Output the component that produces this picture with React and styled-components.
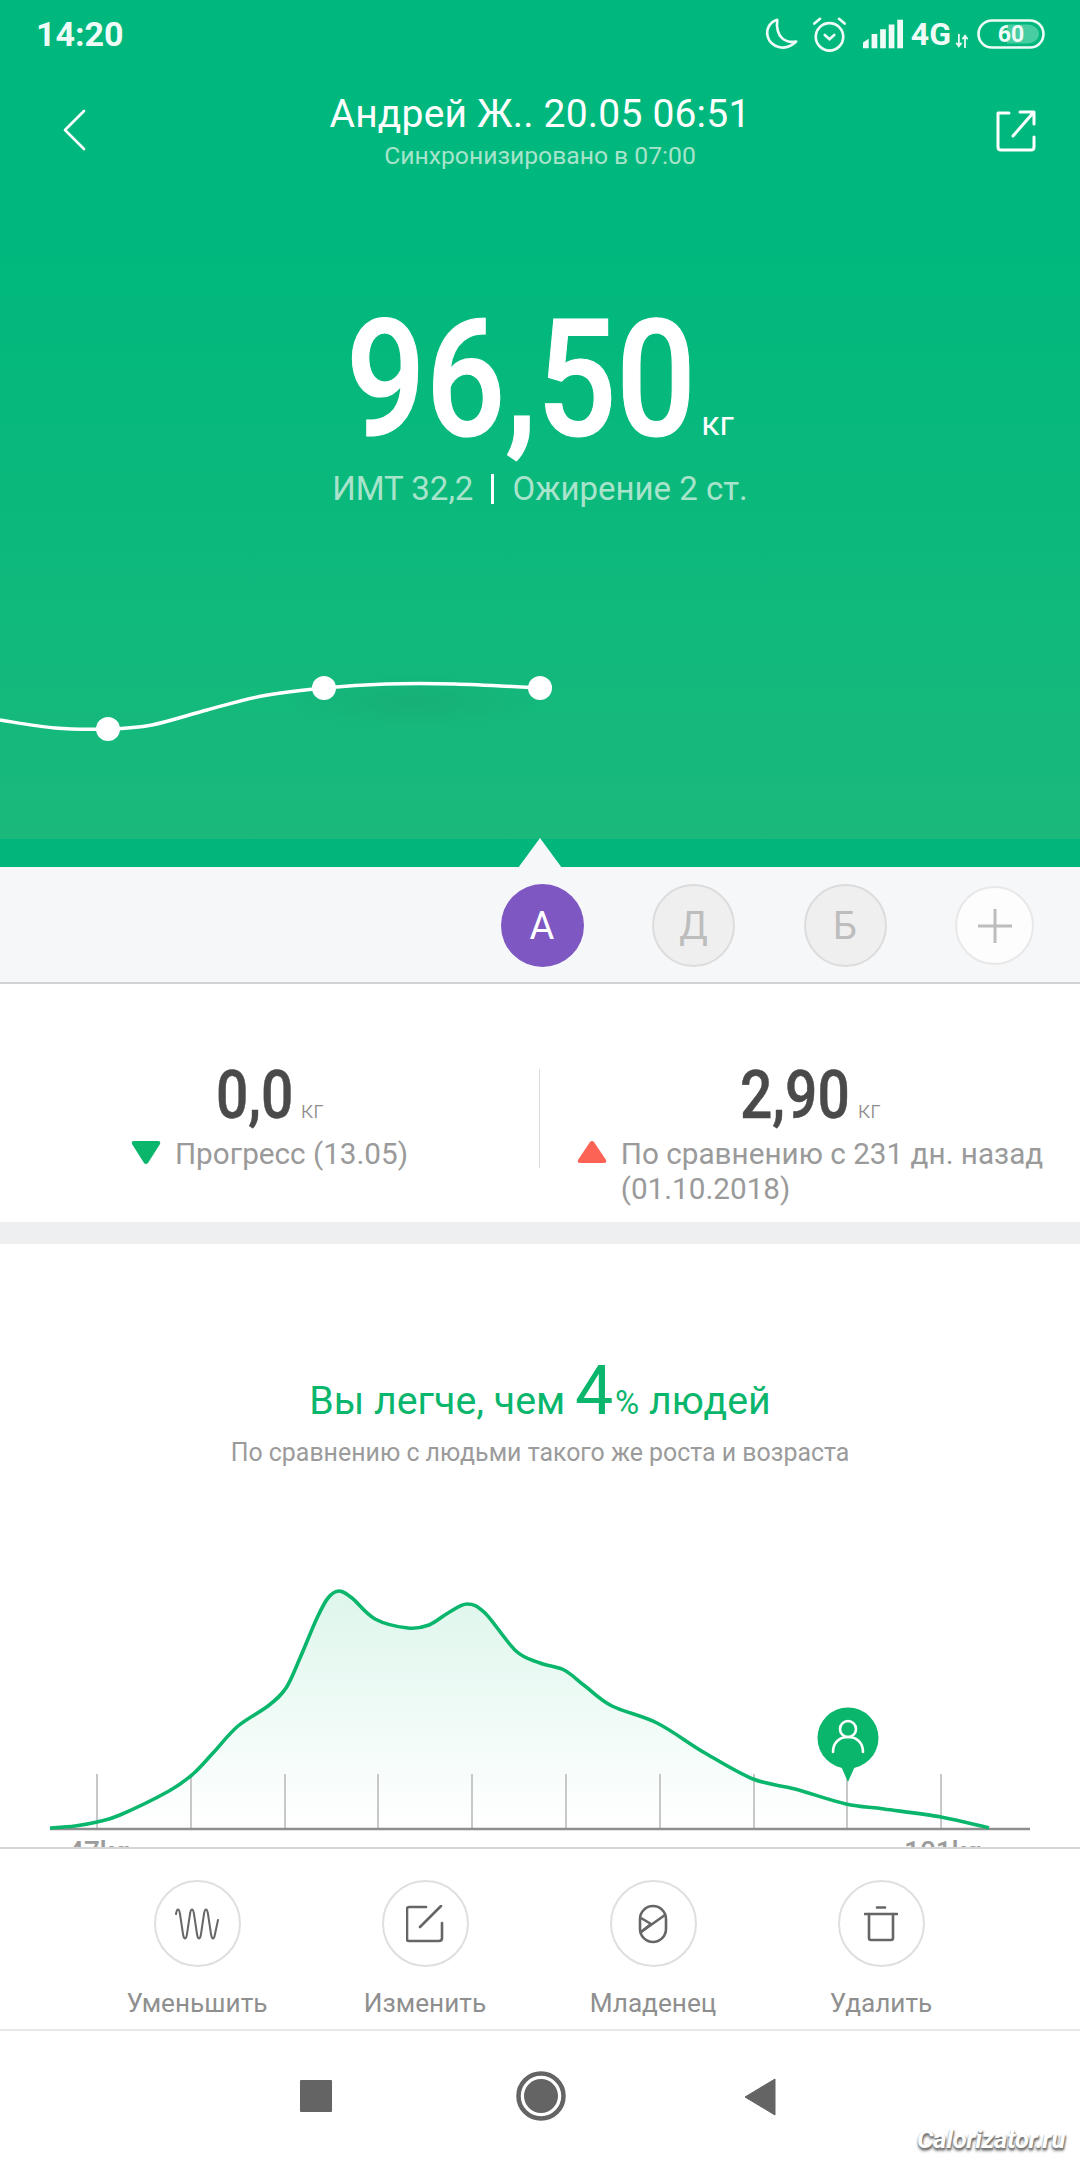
import React from "react";
import styled, { createGlobalStyle } from "styled-components";

const Global = createGlobalStyle`
  html, body { margin: 0; padding: 0; background: #fff; }
  body { font-family: Roboto, "Liberation Sans", sans-serif; }
  * { box-sizing: border-box; }
`;

const Page = styled.div`
  position: relative;
  width: 1080px;
  height: 2160px;
  overflow: hidden;
  background: #fff;
`;

const Hero = styled.section`
  height: 839px;
  display: flex;
  flex-direction: column;
  background: linear-gradient(180deg, #00b87d 0%, #00b87d 30%, #1ab97b 100%);
  color: #fff;
`;

const StatusBar = styled.div`
  height: 68px;
  padding: 0 35px 0 36px;
  display: flex;
  align-items: center;
  justify-content: space-between;
`;

const Clock = styled.span`
  font-size: 34px;
  font-weight: 700;
  color: #eefbf6;
`;

const StatusIcons = styled.div`
  display: flex;
  align-items: center;
`;

const NetLabel = styled.span`
  font-size: 32px;
  line-height: 32px;
  font-weight: 700;
  margin: 0 0 0 8px;
  color: #eefbf6;
`;

const Header = styled.header`
  height: 90px;
  padding: 0 44px 0 63px;
  display: flex;
  align-items: flex-start;
  justify-content: space-between;
`;

const TitleBlock = styled.div`
  display: flex;
  flex-direction: column;
  align-items: center;
  padding-top: 23px;
  margin-left: -2px;
`;

const Title = styled.div`
  font-size: 39px;
  line-height: 46px;
  font-weight: 400;
  white-space: nowrap;
  letter-spacing: 0.2px;
`;

const Subtitle = styled.div`
  margin-top: 2px;
  font-size: 24.7px;
  line-height: 34px;
  font-weight: 400;
  color: #a8e4cb;
  white-space: nowrap;
`;

const WeightBlock = styled.div`
  margin-top: 137px;
  display: flex;
  flex-direction: column;
  align-items: center;
`;

const WeightRow = styled.div`
  display: flex;
  align-items: baseline;
`;

const WeightValue = styled.span`
  display: inline-block;
  font-size: 163px;
  line-height: 170px;
  font-weight: 500;
  -webkit-text-stroke: 1.2px #fff;
  transform: scaleX(0.86);
  transform-origin: left center;
  margin-right: -62px;
`;

const WeightUnit = styled.span`
  font-size: 34px;
  font-weight: 400;
  margin-left: 10px;
`;

const BmiRow = styled.div`
  margin-top: 2px;
  display: flex;
  align-items: center;
  font-size: 33px;
  line-height: 44px;
  color: #a8e4cb;
  white-space: nowrap;
`;

const BmiRule = styled.span`
  width: 3px;
  height: 30px;
  background: #fff;
  margin: 0 18px;
`;

const Spark = styled.svg`
  display: block;
  margin-top: auto;
  margin-bottom: 80px;
  flex: none;
`;

const Band = styled.div`
  position: relative;
  height: 28px;
  background: #00b67b;
`;

const Notch = styled.svg`
  position: absolute;
  left: 518px;
  top: -1px;
`;

const AvatarBar = styled.div`
  height: 117px;
  padding: 17px 46px 0 0;
  display: flex;
  align-items: flex-start;
  justify-content: flex-end;
  gap: 68.5px;
  background: #f6f7f9;
  border-bottom: 2px solid #d2d3d5;
`;

const Avatar = styled.div`
  width: ${(p) => (p.$size ? p.$size : 83)}px;
  height: ${(p) => (p.$size ? p.$size : 83)}px;
  margin-top: ${(p) => (p.$size ? 2 : 0)}px;
  border-radius: 50%;
  display: flex;
  align-items: center;
  justify-content: center;
  font-size: 38px;
  background: ${(p) => p.$bg};
  color: ${(p) => p.$fg};
  border: ${(p) => (p.$line ? `2px solid ${p.$line}` : "none")};
`;

const Stats = styled.section`
  height: 238px;
  padding-top: 85px;
  display: grid;
  grid-template-columns: 539px 1px 1fr;
  align-items: start;
`;

const Divider = styled.div`
  width: 1px;
  height: 99px;
  background: #dcdcdc;
`;

const StatCol = styled.div`
  display: flex;
  flex-direction: column;
  align-items: center;
`;

const StatValue = styled.div`
  display: flex;
  align-items: baseline;
  height: 56px;
`;

const StatNumber = styled.span`
  display: inline-block;
  font-size: 67px;
  line-height: 52px;
  font-weight: 500;
  color: #4a4a4a;
  -webkit-text-stroke: 0.5px #4a4a4a;
  transform: scaleX(0.85);
  transform-origin: left center;
  margin-right: ${(p) => p.$trim}px;
`;

const StatUnit = styled.span`
  font-size: 24px;
  font-weight: 300;
  margin-left: 8px;
  color: #8c8c8c;
`;

const StatNote = styled.div`
  margin-top: 11px;
  display: flex;
  align-items: flex-start;
  gap: 14px;
`;

const StatText = styled.div`
  font-size: 29.7px;
  line-height: 35px;
  color: #9a9a9a;
  white-space: nowrap;
`;

const Marker = styled.svg`
  flex: none;
  margin-top: 4px;
`;

const Gap = styled.div`
  height: 22px;
  background: #eeeff0;
`;

const Compare = styled.section`
  position: relative;
  height: 603px;
  overflow: hidden;
  padding-top: 115px;
  display: flex;
  flex-direction: column;
  align-items: center;
`;

const Headline = styled.div`
  display: flex;
  align-items: baseline;
  height: 64px;
  font-size: 39.3px;
  line-height: 64px;
  color: #0ab56c;
  white-space: pre;
`;

const HeadlineNum = styled.span`
  font-size: 68px;
  line-height: 64px;
  font-weight: 400;
  margin-right: 2px;
`;

const HeadlinePct = styled.span`
  font-size: 33px;
`;

const Caption = styled.div`
  margin-top: 13px;
  font-size: 24.9px;
  line-height: 34px;
  color: #9b9b9b;
  white-space: nowrap;
`;

const Chart = styled.svg`
  display: block;
  margin-top: 102px;
  flex: none;
`;

const AxisLabels = styled.div`
  position: absolute;
  top: 590px;
  left: 0;
  width: 1080px;
  font-size: 28px;
  line-height: 36px;
  font-weight: 500;
  color: #9c9c9c;
`;

const AxisLabel = styled.span`
  position: absolute;
  left: ${(p) => p.$x}px;
  top: 0;
`;

const Actions = styled.section`
  height: 184px;
  border-top: 2px solid #d6d6d6;
  border-bottom: 2px solid #e8e8e8;
  padding-top: 31px;
  display: grid;
  grid-template-columns: repeat(4, 228px);
  padding-left: 83px;
  background: #fff;
`;

const Action = styled.div`
  display: flex;
  flex-direction: column;
  align-items: center;
`;

const ActionCircle = styled.div`
  width: 87px;
  height: 87px;
  border-radius: 50%;
  border: 2px solid #dfdfdf;
  display: flex;
  align-items: center;
  justify-content: center;
`;

const ActionLabel = styled.div`
  margin-top: 18px;
  font-size: 26.2px;
  line-height: 36px;
  color: #8f8f8f;
  white-space: nowrap;
`;

const NavBar = styled.nav`
  height: 128px;
  display: flex;
  align-items: flex-start;
  justify-content: center;
  gap: 181px;
  padding: 0 4px 0 0;
  background: #fff;
`;

const NavCell = styled.div`
  display: flex;
  padding-top: ${(p) => p.$top}px;
  margin: 0 ${(p) => -(p.$nudge || 0)}px 0 ${(p) => p.$nudge || 0}px;
`;

const NavSquare = styled.div`
  width: 32px;
  height: 32px;
  border-radius: 1px;
  background: #646464;
`;

const Watermark = styled.div`
  position: absolute;
  left: 917px;
  top: 2124px;
  font-size: 26px;
  font-style: italic;
  font-weight: 700;
  letter-spacing: -0.4px;
  color: #fff;
  text-shadow: 0 1px 1px #777, 1px 2px 2px #777, 0 3px 3px #999;
`;

/* smooth line through measured points */
const smooth = (pts) => {
  let d = `M${pts[0][0]} ${pts[0][1]}`;
  for (let i = 0; i < pts.length - 1; i++) {
    const p0 = pts[i - 1] || pts[i];
    const p1 = pts[i];
    const p2 = pts[i + 1];
    const p3 = pts[i + 2] || p2;
    const c1x = p1[0] + (p2[0] - p0[0]) / 6;
    const c1y = p1[1] + (p2[1] - p0[1]) / 6;
    const c2x = p2[0] - (p3[0] - p1[0]) / 6;
    const c2y = p2[1] - (p3[1] - p1[1]) / 6;
    d += ` C${c1x.toFixed(1)} ${c1y.toFixed(1)} ${c2x.toFixed(1)} ${c2y.toFixed(1)} ${p2[0]} ${p2[1]}`;
  }
  return d;
};

const CHART_TOP = 1571;
const raw = [
  [50, 1827], [75, 1825], [97, 1821], [120, 1814], [169, 1790], [193, 1773], [213, 1752], [238, 1725],
  [268, 1705], [286, 1687], [300, 1657], [317, 1617], [328, 1597], [339, 1590], [352, 1597], [375, 1618],
  [408, 1627], [429, 1624], [448, 1612], [467, 1603], [485, 1612], [516, 1650], [540, 1662],
  [564, 1669], [585, 1685], [612, 1705], [657, 1722], [705, 1752], [753, 1778], [795, 1788],
  [846, 1803], [884, 1808], [941, 1816], [989, 1827],
];
const curve = raw.map(([x, y]) => [x, y - CHART_TOP]);
const curvePath = smooth(curve);
const ticks = [97, 191, 285, 378, 472, 566, 660, 754, 847, 941];
const AXIS = 1828 - CHART_TOP;

const sparkPts = [
  [0, 51], [55, 59], [108, 60], [152, 56], [207, 41], [262, 27], [324, 19], [386, 15], [455, 15], [540, 19],
];

function DistributionChart() {
  return (
    <Chart width="1080" height="262" viewBox="0 0 1080 262">
      <defs>
        <linearGradient id="area" x1="0" y1="0" x2="0" y2="1">
          <stop offset="0" stopColor="#def6ec" />
          <stop offset="1" stopColor="#ffffff" />
        </linearGradient>
      </defs>
      <path d={`${curvePath} L989 ${AXIS} L50 ${AXIS} Z`} fill="url(#area)" />
      {ticks.map((x) => (
        <line key={x} x1={x} x2={x} y1={1773 - CHART_TOP} y2={AXIS} stroke="#c8c8c8" strokeWidth="2" />
      ))}
      <line x1="50" x2="1030" y1={AXIS} y2={AXIS} stroke="#8e8e8e" strokeWidth="2.5" />
      <path d={curvePath} fill="none" stroke="#0ab56c" strokeWidth="3.6" />
      <g transform={`translate(848 ${1737 - CHART_TOP})`}>
        <circle r="30.5" fill="#0ab56c" />
        <path d="M-8 26 L0 44 L8 26 Z" fill="#0ab56c" />
        <circle cy="-9" r="8" fill="none" stroke="#fff" strokeWidth="2.6" />
        <path d="M-15 14 C-15 4 -8 -1 0 -1 C8 -1 15 4 15 14" fill="none" stroke="#fff" strokeWidth="2.6" strokeLinecap="round" />
      </g>
    </Chart>
  );
}

const StatusGlyphs = () => (
  <StatusIcons>
    <svg width="34" height="34" viewBox="0 0 36 36" fill="none" stroke="#eefbf6" strokeWidth="2.8">
      <path d="M14 3 C5 6 2 14 4 21 C7 31 22 38 34 26 C23 28 12 22 14 3 Z" strokeLinejoin="round" />
    </svg>
    <svg width="37" height="36" viewBox="0 0 38 38" fill="none" stroke="#eefbf6" strokeWidth="2.8" style={{ marginLeft: 13 }} strokeLinecap="round">
      <circle cx="19" cy="22" r="14.5" />
      <path d="M3 8 L9 3 M35 8 L29 3" />
      <path d="M14 20 L19 24.5 L24 20" />
    </svg>
    <svg width="40" height="30" viewBox="0 0 42 30" fill="#eefbf6" style={{ marginLeft: 15 }}>
      <path d="M0 24 L6 20 V30 H0 Z" />
      <rect x="9" y="15" width="6" height="15" />
      <rect x="18" y="10" width="6" height="20" />
      <rect x="27" y="5" width="6" height="25" />
      <rect x="36" y="0" width="6" height="30" />
    </svg>
    <NetLabel>4G</NetLabel>
    <svg width="13" height="14" viewBox="0 0 14 16" fill="none" stroke="#eefbf6" strokeWidth="2" style={{ margin: "14px 9px 0 4px" }}>
      <path d="M4 0 V13 M1 10 L4 14 L7 10" />
      <path d="M11 16 V3 M8 6 L11 2 L14 6" />
    </svg>
    <svg width="68" height="30" viewBox="0 0 68 30">
      <rect x="1.5" y="1.5" width="65" height="27" rx="13.5" fill="none" stroke="#eefbf6" strokeWidth="2.6" />
      <path d="M30 5.5 H50 C57 5.5 62 10 62 15 C62 20 57 24.5 50 24.5 H30 Z" fill="#eefbf6" fillOpacity="0.3" />
      <text x="34" y="23" textAnchor="middle" fontFamily="Roboto, sans-serif" fontWeight="700" fontSize="23" fill="#eefbf6">60</text>
    </svg>
  </StatusIcons>
);

export default function App() {
  return (
    <Page>
      <Global />
      <Hero>
        <StatusBar>
          <Clock>14:20</Clock>
          <StatusGlyphs />
        </StatusBar>
        <Header>
          <svg width="23" height="42" viewBox="0 0 23 42" fill="none" stroke="#fff" strokeWidth="2.6" style={{ marginTop: 41 }} strokeLinecap="round" strokeLinejoin="round">
            <path d="M21 2 L2 21 L21 40" />
          </svg>
          <TitleBlock>
            <Title>Андрей Ж.. 20.05 06:51</Title>
            <Subtitle>Синхронизировано в 07:00</Subtitle>
          </TitleBlock>
          <svg width="40" height="42" viewBox="0 0 40 42" fill="none" stroke="#fff" strokeWidth="3" style={{ marginTop: 42 }} strokeLinecap="round" strokeLinejoin="round">
            <path d="M13 3 H2 V37 Q2 40 5 40 H35 Q38 40 38 37 V27" />
            <path d="M17 26 L37 3 M24 2 H38 V14" />
          </svg>
        </Header>
        <WeightBlock>
          <WeightRow>
            <WeightValue>96,50</WeightValue>
            <WeightUnit>кг</WeightUnit>
          </WeightRow>
          <BmiRow>
            <span>ИМТ 32,2</span>
            <BmiRule />
            <span>Ожирение 2 ст.</span>
          </BmiRow>
        </WeightBlock>
        <Spark width="1080" height="90" viewBox="0 0 1080 90">
          <defs>
            <radialGradient id="glow" cx="0.5" cy="0.5" r="0.5">
              <stop offset="0" stopColor="#1c9f6c" stopOpacity="0.35" />
              <stop offset="1" stopColor="#1c9f6c" stopOpacity="0" />
            </radialGradient>
          </defs>
          <ellipse cx="415" cy="32" rx="130" ry="30" fill="url(#glow)" />
          <path d={smooth(sparkPts)} fill="none" stroke="#fff" strokeWidth="3.5" />
          <circle cx="108" cy="60" r="12" fill="#fff" />
          <circle cx="324" cy="19" r="12" fill="#fff" />
          <circle cx="540" cy="19" r="12" fill="#fff" />
        </Spark>
      </Hero>
      <Band>
        <Notch width="44" height="30" viewBox="0 0 44 30">
          <path d="M22 0 L44 30 H0 Z" fill="#f6f7f9" />
        </Notch>
      </Band>
      <AvatarBar>
        <Avatar $bg="#7e57c2" $fg="#fff">А</Avatar>
        <Avatar $bg="#efefef" $fg="#bdbdbd" $line="#dcdcdc">Д</Avatar>
        <Avatar $bg="#efefef" $fg="#bdbdbd" $line="#dcdcdc">Б</Avatar>
        <Avatar $bg="#fdfdfd" $fg="#bdbdbd" $line="#e8e8e8" $size={79}>
          <svg width="36" height="36" viewBox="0 0 36 36" stroke="#bdbdbd" strokeWidth="3">
            <path d="M18 1 V35 M1 18 H35" />
          </svg>
        </Avatar>
      </AvatarBar>
      <Stats>
        <StatCol>
          <StatValue>
            <StatNumber $trim={-14}>0,0</StatNumber>
            <StatUnit>кг</StatUnit>
          </StatValue>
          <StatNote>
            <Marker width="30" height="25" viewBox="0 0 30 25">
              <path d="M3 1 H27 Q30 1 29 4 L17 23 Q15 25 13 23 L1 4 Q0 1 3 1 Z" fill="#0ab56c" />
            </Marker>
            <StatText>Прогресс (13.05)</StatText>
          </StatNote>
        </StatCol>
        <Divider />
        <StatCol>
          <StatValue>
            <StatNumber $trim={-19}>2,90</StatNumber>
            <StatUnit>кг</StatUnit>
          </StatValue>
          <StatNote>
            <Marker width="30" height="24" viewBox="0 0 30 24">
              <path d="M3 23 H27 Q30 23 29 20 L17 2 Q15 0 13 2 L1 20 Q0 23 3 23 Z" fill="#fc6354" />
            </Marker>
            <StatText>
              По сравнению с 231 дн. назад
              <br />
              (01.10.2018)
            </StatText>
          </StatNote>
        </StatCol>
      </Stats>
      <Gap />
      <Compare>
        <Headline>
          Вы легче, чем <HeadlineNum>4</HeadlineNum>
          <HeadlinePct>%</HeadlinePct> людей
        </Headline>
        <Caption>По сравнению с людьми такого же роста и возраста</Caption>
        <DistributionChart />
        <AxisLabels>
          <AxisLabel $x={68}>47kg</AxisLabel>
          <AxisLabel $x={904}>101kg</AxisLabel>
        </AxisLabels>
      </Compare>
      <Actions>
        <Action>
          <ActionCircle>
            <svg width="44" height="32" viewBox="0 0 44 32" fill="none" stroke="#666" strokeWidth="2" strokeLinecap="round">
              <path d="M1 6 C2 0 4 0 5 6 L8 26 C9 32 11 32 12 26 L15 6 C16 0 18 0 19 6 L22 26 C23 32 25 32 26 26 L29 6 C30 0 32 0 33 6 L36 26 C37 32 39 32 40 26 L43 12" />
            </svg>
          </ActionCircle>
          <ActionLabel>Уменьшить</ActionLabel>
        </Action>
        <Action>
          <ActionCircle>
            <svg width="38" height="38" viewBox="0 0 38 38" fill="none" stroke="#666" strokeWidth="2.6" strokeLinecap="round" strokeLinejoin="round">
              <path d="M20 2 H3 Q1 2 1 4 V34 Q1 36 3 36 H33 Q36 36 36 33 V18" />
              <path d="M14 22 L35 1" />
            </svg>
          </ActionCircle>
          <ActionLabel>Изменить</ActionLabel>
        </Action>
        <Action>
          <ActionCircle>
            <svg width="30" height="40" viewBox="0 0 30 40" fill="none" stroke="#666" strokeWidth="2.6" strokeLinejoin="round">
              <rect x="2" y="2" width="26" height="36" rx="13" />
              <path d="M3 14 L13 20 L3 28" />
              <path d="M3 28 L27 11" />
            </svg>
          </ActionCircle>
          <ActionLabel>Младенец</ActionLabel>
        </Action>
        <Action>
          <ActionCircle>
            <svg width="34" height="36" viewBox="0 0 34 36" fill="none" stroke="#666" strokeWidth="2.6" strokeLinecap="round" strokeLinejoin="round">
              <path d="M13 1.5 H21" />
              <path d="M1 8 H33" />
              <path d="M5 8 V32 Q5 34 7 34 H27 Q29 34 29 32 V8" />
            </svg>
          </ActionCircle>
          <ActionLabel>Удалить</ActionLabel>
        </Action>
      </Actions>
      <NavBar>
        <NavCell $top={49}>
          <NavSquare />
        </NavCell>
        <NavCell $top={40} $nudge={3}>
          <svg width="50" height="50" viewBox="0 0 50 50">
            <circle cx="25" cy="25" r="22.5" fill="none" stroke="#646464" strokeWidth="4.5" />
            <circle cx="25" cy="25" r="17" fill="#646464" />
          </svg>
        </NavCell>
        <NavCell $top={47}>
          <svg width="32" height="38" viewBox="0 0 32 38">
            <path d="M31 1 V37 L1 19 Z" fill="#646464" stroke="#646464" strokeLinejoin="round" />
          </svg>
        </NavCell>
      </NavBar>
      <Watermark>Calorizator.ru</Watermark>
    </Page>
  );
}
